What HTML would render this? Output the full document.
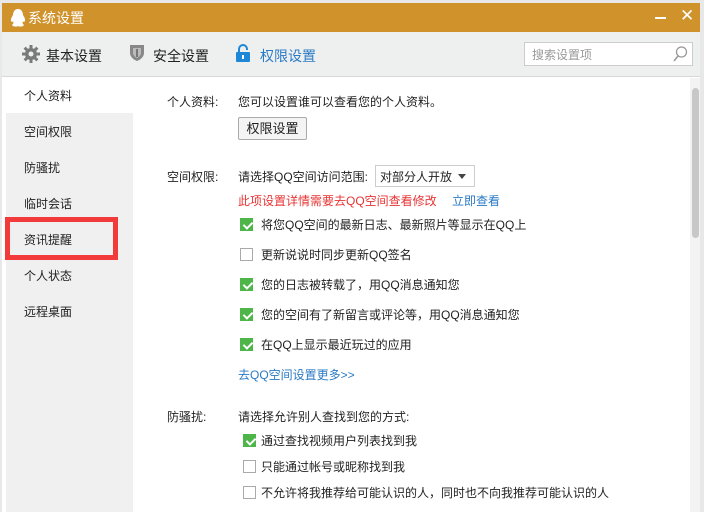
<!DOCTYPE html><html><head><meta charset="utf-8"><style>
*{margin:0;padding:0;box-sizing:border-box}
body{width:704px;height:512px;overflow:hidden;background:#e8e8e8;font-family:"Liberation Sans","Noto Sans CJK SC",sans-serif;font-size:12px;color:#222;position:relative}
.a{position:absolute;white-space:nowrap}
.cb{position:absolute;width:13px;height:13px;border:1px solid #aaa;background:#fff}
.cb.on{background:#4eb548;border-color:#4eb548}
.cb.on::after{content:"";position:absolute;left:3.5px;top:1px;width:4px;height:7px;border:solid #fff;border-width:0 2px 2px 0;transform:rotate(45deg)}
</style></head><body>
<div class="a" style="left:2px;top:3px;width:698px;height:509px;background:#fff"></div>
<div class="a" style="left:2px;top:3px;width:698px;height:29px;background:#d0922b"></div>
<svg class="a" style="left:9px;top:8px" width="18" height="20" viewBox="0 0 18 20"><path d="M9 1C5 1 4 5 4 7 2 10 1 13 3 14 4 14 4 13 4 13 5 15 4 16 3 17 4 19 8 19 9 18 10 19 14 19 15 17 14 16 13 15 14 13 14 13 14 14 15 14 17 13 16 10 14 7 14 5 13 1 9 1Z" fill="#fff"/></svg>
<div class="a" style="left:28px;top:8px;color:#fff;font-size:14px">系统设置</div>
<div class="a" style="left:655px;top:17px;width:11px;height:2px;background:#fff"></div>
<div class="a" style="left:680px;top:6px;color:#fff;font-size:17px">✕</div>
<div class="a" style="left:2px;top:32px;width:698px;height:45px;background:#eef0f0;border-bottom:1px solid #d8d8d8"></div>
<svg class="a" style="left:22px;top:45px" width="18" height="18" viewBox="0 0 18 18"><g fill="#7a7a7a"><circle cx="9" cy="9" r="6"/><rect x="7.5" y="0" width="3" height="18"/><rect x="0" y="7.5" width="18" height="3"/><rect x="7.5" y="0" width="3" height="18" transform="rotate(45 9 9)"/><rect x="7.5" y="0" width="3" height="18" transform="rotate(-45 9 9)"/></g><circle cx="9" cy="9" r="2.5" fill="#eef0f0"/></svg>
<div class="a" style="left:46px;top:46px;font-size:14px">基本设置</div>
<svg class="a" style="left:129px;top:44px" width="16" height="18" viewBox="0 0 16 18"><path d="M1 1H15V9C15 13 11 16 8 17 5 16 1 13 1 9Z" fill="#888"/><path d="M4 4H12V9C12 11 10 13 8 14 6 13 4 11 4 9Z" fill="#bbb"/><rect x="7" y="5" width="2" height="8" fill="#777"/></svg>
<div class="a" style="left:153px;top:46px;font-size:14px">安全设置</div>
<svg class="a" style="left:236px;top:44px" width="14" height="18" viewBox="0 0 14 18"><path d="M3 8V5A4 4 0 0 1 11 5V6" stroke="#1e88d8" stroke-width="2" fill="none"/><rect x="0" y="8" width="14" height="10" rx="1" fill="#1e88d8"/><rect x="6" y="11" width="2" height="4" fill="#fff"/></svg>
<div class="a" style="left:260px;top:46px;font-size:14px;color:#2a7ac4">权限设置</div>
<div class="a" style="left:524px;top:42px;width:169px;height:24px;border:1px solid #ccc;background:#fff"></div>
<div class="a" style="left:532px;top:46px;color:#999;font-size:12px">搜索设置项</div>
<svg class="a" style="left:672px;top:45px" width="16" height="18" viewBox="0 0 16 18"><circle cx="9.5" cy="7" r="5" stroke="#999" stroke-width="1.3" fill="none"/><path d="M6 11L2 16" stroke="#999" stroke-width="1.5"/></svg>
<div class="a" style="left:6px;top:78px;width:127px;height:434px;background:#f0f0f0"></div>
<div class="a" style="left:6px;top:78px;width:127px;height:35px;background:#fff"></div>
<div class="a" style="left:24px;top:87px">个人资料</div>
<div class="a" style="left:24px;top:123px">空间权限</div>
<div class="a" style="left:24px;top:159px">防骚扰</div>
<div class="a" style="left:24px;top:195px">临时会话</div>
<div class="a" style="left:24px;top:231px">资讯提醒</div>
<div class="a" style="left:24px;top:267px">个人状态</div>
<div class="a" style="left:24px;top:303px">远程桌面</div>
<div class="a" style="left:5px;top:217px;width:113px;height:43px;border:5px solid #f23a3a"></div>
<div class="a" style="left:690px;top:78px;width:10px;height:434px;background:#f3f3f3"></div>
<div class="a" style="left:692px;top:88px;width:7px;height:150px;background:#c8c8c8;border-radius:4px"></div>
<div class="a" style="left:167px;top:93px">个人资料:</div>
<div class="a" style="left:238px;top:93px">您可以设置谁可以查看您的个人资料。</div>
<div class="a" style="left:238px;top:117px;width:69px;height:23px;border:1px solid #aaa;border-radius:2px;background:#f4f4f4;text-align:center;line-height:21px;font-size:13px">权限设置</div>
<div class="a" style="left:167px;top:168px">空间权限:</div>
<div class="a" style="left:238px;top:168px">请选择QQ空间访问范围:</div>
<div class="a" style="left:375px;top:165px;width:100px;height:22px;border:1px solid #ccc;background:#fff"></div>
<div class="a" style="left:380px;top:168px">对部分人开放</div>
<div class="a" style="left:458px;top:174px;border:4px solid transparent;border-top:5px solid #444"></div>
<div class="a" style="left:238px;top:192px;color:#e83434">此项设置详情需要去QQ空间查看修改</div>
<div class="a" style="left:452px;top:192px;color:#2a7ac4">立即查看</div>
<div class="cb on" style="left:240px;top:218px"></div><div class="a" style="left:261px;top:216px">将您QQ空间的最新日志、最新照片等显示在QQ上</div>
<div class="cb" style="left:240px;top:248px"></div><div class="a" style="left:261px;top:246px">更新说说时同步更新QQ签名</div>
<div class="cb on" style="left:240px;top:278px"></div><div class="a" style="left:261px;top:276px">您的日志被转载了，用QQ消息通知您</div>
<div class="cb on" style="left:240px;top:308px"></div><div class="a" style="left:261px;top:306px">您的空间有了新留言或评论等，用QQ消息通知您</div>
<div class="cb on" style="left:240px;top:338px"></div><div class="a" style="left:261px;top:336px">在QQ上显示最近玩过的应用</div>
<div class="a" style="left:238px;top:366px;color:#2a7ac4">去QQ空间设置更多&gt;&gt;</div>
<div class="a" style="left:167px;top:408px">防骚扰:</div>
<div class="a" style="left:238px;top:408px">请选择允许别人查找到您的方式:</div>
<div class="cb on" style="left:243px;top:434px"></div><div class="a" style="left:261px;top:432px">通过查找视频用户列表找到我</div>
<div class="cb" style="left:243px;top:460px"></div><div class="a" style="left:261px;top:458px">只能通过帐号或昵称找到我</div>
<div class="cb" style="left:243px;top:486px"></div><div class="a" style="left:261px;top:484px">不允许将我推荐给可能认识的人，同时也不向我推荐可能认识的人</div>
</body></html>
